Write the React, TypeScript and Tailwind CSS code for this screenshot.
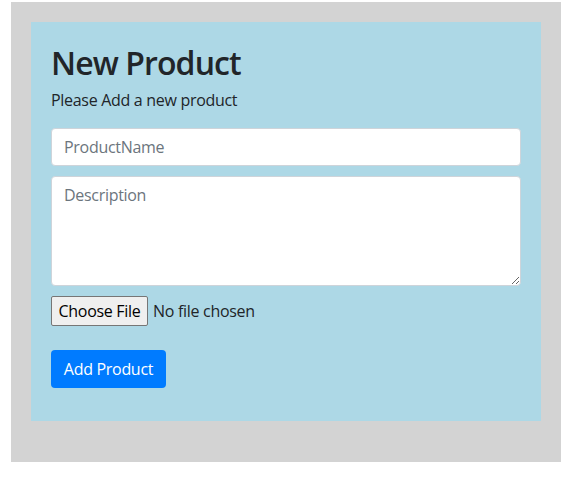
import React from "react";

export default function App() {
  const font = { fontFamily: '"Open Sans", "Noto Sans", Arial, sans-serif' };
  return (
    <div className="w-[572px] h-[479px] bg-white pt-[2px] pl-[11px]" style={font}>
      <div className="w-[550px] h-[460px] bg-[#d3d3d3] pt-[20px] px-[20px]">
        <div className="w-[510px] h-[399px] bg-[#add8e6] p-[20px] text-[#212529]">
          <h1 className="text-[32px] leading-[38px] pt-[2px] font-semibold tracking-[-0.9px] mb-[6px]">New Product</h1>
          <p className="text-[16px] leading-[24px] mb-[16px] tracking-[-0.3px]">Please Add a new product</p>
          <input
            type="text"
            placeholder="ProductName"
            className="block w-[470px] h-[38px] bg-white border border-[#ced4da] rounded-[4px] px-[12px] text-[16px] placeholder:text-[#6c757d] outline-none tracking-[-0.3px]"
          />
          <textarea
            placeholder="Description"
            className="block mt-[10px] w-[470px] h-[110px] bg-white border border-[#ced4da] rounded-[4px] px-[12px] py-[6px] text-[16px] leading-[24px] placeholder:text-[#6c757d] outline-none tracking-[-0.3px]"
          />
          <div className="flex items-center mt-[10px] h-[30px]">
            <span className="flex items-center justify-center w-[97px] h-[30px] bg-[#efefef] border border-[#767676] rounded-[2px] text-[16px] text-black tracking-[-0.3px]">
              Choose File
            </span>
            <span className="ml-[5px] text-[16px] tracking-[-0.3px]">No file chosen</span>
          </div>
          <button className="mt-[24px] w-[115px] h-[38px] bg-[#007bff] text-white rounded-[4px] text-[16px] tracking-[-0.3px]">
            Add Product
          </button>
        </div>
      </div>
    </div>
  );
}
